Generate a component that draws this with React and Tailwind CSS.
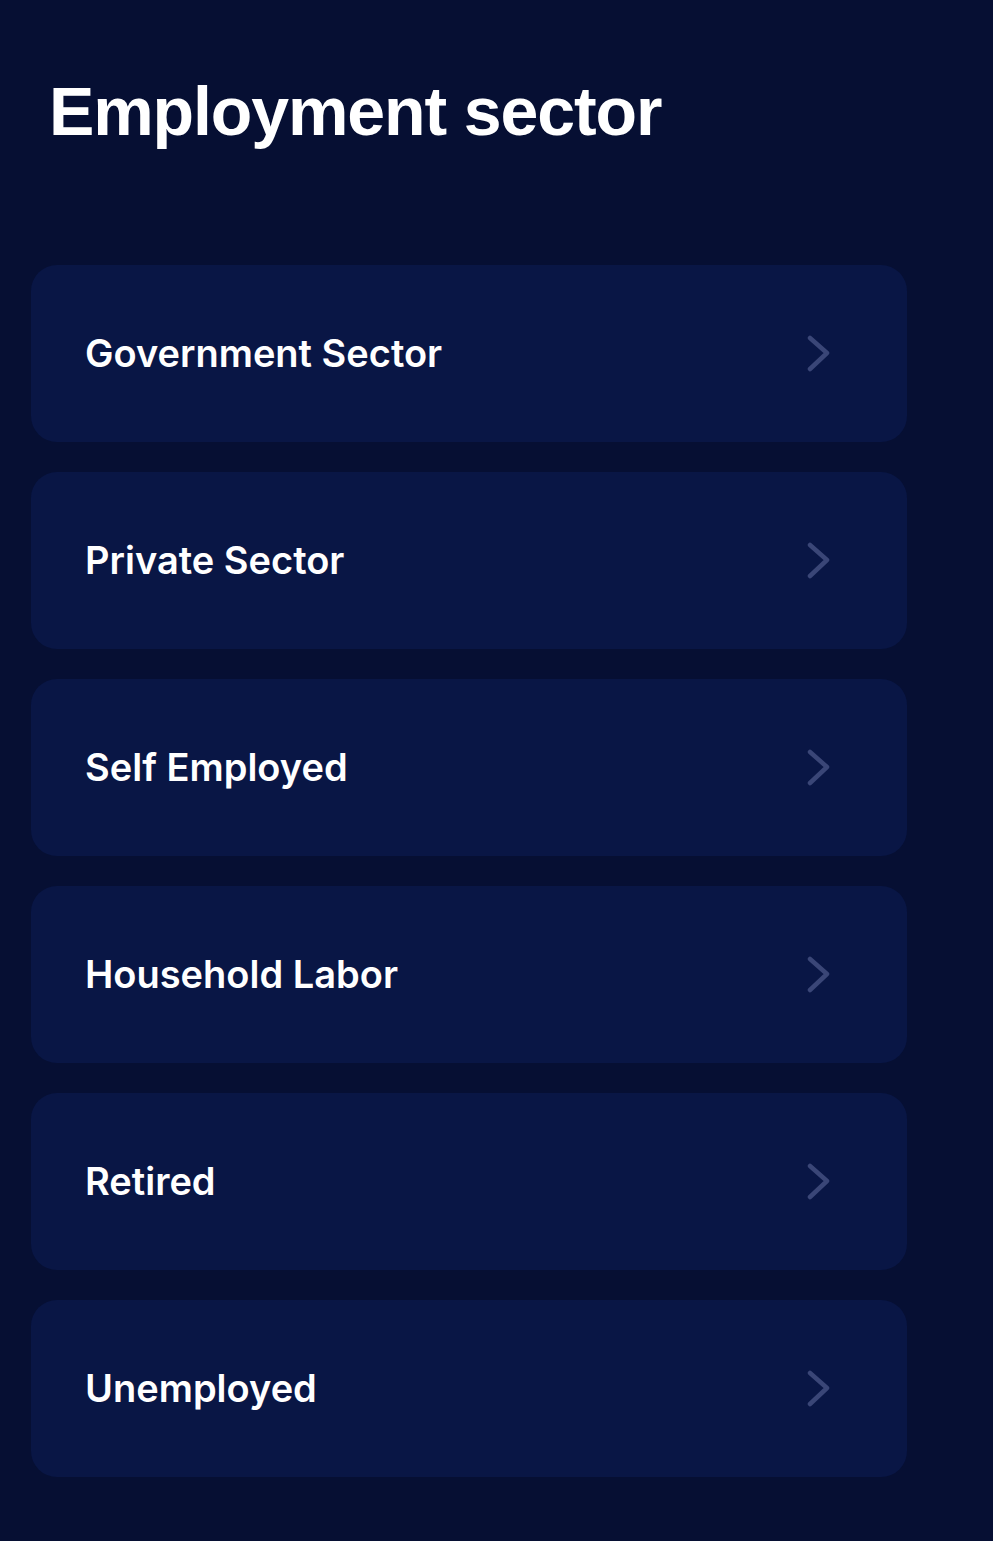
import React from 'react';

const sectors = [
  'Government Sector',
  'Private Sector',
  'Self Employed',
  'Household Labor',
  'Retired',
  'Unemployed',
];

const Chevron = () => (
  <svg width="24" height="40" viewBox="0 0 24 40" fill="none" className="shrink-0">
    <path
      d="M3 4L20 19L3 35"
      stroke="#3a4677"
      strokeWidth="4.5"
      strokeLinecap="round"
      strokeLinejoin="round"
    />
  </svg>
);

const SectorCard = ({ label }) => (
  <button className="flex h-[177px] w-[876px] items-center justify-between rounded-[26px] bg-[#091645] pl-[54px] pr-[76px] text-left">
    <span
      className="text-[38px] font-semibold tracking-[0px] text-white"
      style={{ fontFamily: 'Inter, "Noto Sans", sans-serif' }}
    >
      {label}
    </span>
    <Chevron />
  </button>
);

export default function App() {
  return (
    <div className="min-h-[1541px] w-full bg-[#060f33] pt-[77px]">
      <h1
        className="pl-[49px] text-[68px] font-bold leading-none tracking-[-1.1px] text-white"
        style={{ fontFamily: '"Liberation Sans", Arial, sans-serif' }}
      >
        Employment sector
      </h1>
      <div className="mt-[120px] flex flex-col gap-[30px] pl-[31px]">
        {sectors.map((s) => (
          <SectorCard key={s} label={s} />
        ))}
      </div>
    </div>
  );
}
